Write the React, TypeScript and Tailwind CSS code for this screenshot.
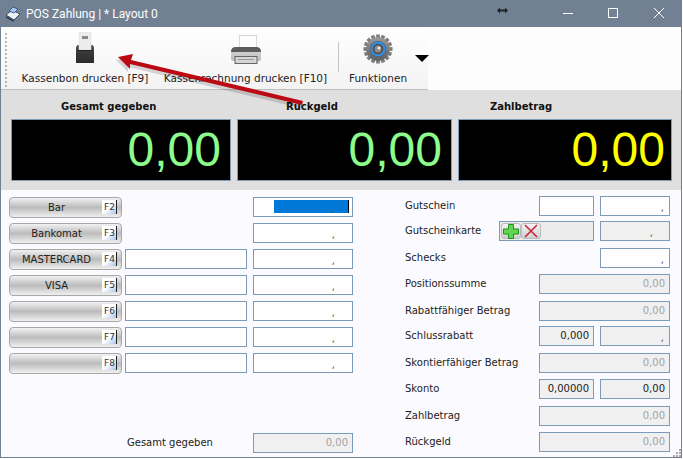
import React from "react";

const tahoma = "font-['DejaVu_Sans',sans-serif]";

function Input({ w, text, disabled, dark, comma, selected, commaPad, children }: { w: string; text?: string; disabled?: boolean; dark?: boolean; comma?: boolean; selected?: boolean; commaPad?: string; children?: React.ReactNode }) {
  return (
    <div className={`${w} h-5 shrink-0 border border-[#7b9bbb] ${disabled ? "bg-[#f0f0f0]" : "bg-white"} relative flex items-center justify-end pr-[4px] text-[10px] leading-none ${dark ? "text-[#222]" : "text-[#a4a4a4]"}`}>
      {selected && <div className="absolute left-[20px] right-[3px] top-[2px] bottom-[3px] bg-[#0078d7] border-r border-black" />}
      {children}
      {text && <span className="relative">{text}</span>}
      {comma && <span className={`relative text-[#555] text-[10px] leading-none mt-[3px] ${commaPad ?? "mr-[1px]"}`}>,</span>}
    </div>
  );
}

function PayButton({ label, fkey }: { label: string; fkey: string }) {
  return (
    <div className="w-[113px] h-[21px] shrink-0 relative rounded-[4px] border border-[#a8a8a8] bg-linear-to-b from-[#f2f2f2] via-[#bcbcbc] to-[#f0f0f0] flex items-center">
      <div className="w-[93px] text-center text-[10px] leading-none text-[#222]">{label}</div>
      <div className="absolute right-[4px] top-[2px] w-[15px] h-[14px] bg-linear-to-br from-white via-white to-[#a9c4ea] border-r border-[#222] text-[9px] leading-[14px] text-[#333] pl-[2px]">{fkey}</div>
    </div>
  );
}

function LeftRow({ label, fkey, mid, selected }: { label: string; fkey: string; mid?: boolean; selected?: boolean }) {
  return (
    <div className="flex h-[26px] items-start">
      <PayButton label={label} fkey={fkey} />
      <div className="w-[3px]" />
      {mid ? <Input w="w-[122px]" /> : <div className="w-[122px]" />}
      <div className="w-[6px]" />
      <Input w="w-[100px]" comma selected={selected} commaPad="mr-[13px]" />
    </div>
  );
}

function RightRow({ label, h, lw, children }: { label: string; h: string; lw?: string; children: React.ReactNode }) {
  return (
    <div className={`flex ${h} items-start`}>
      <div className={`${lw ?? "w-[134px]"} shrink-0 h-5 flex items-center text-[10px] leading-none text-[#222] whitespace-nowrap`}>{label}</div>
      {children}
    </div>
  );
}

function Display({ w, color, title, pl, pr }: { w: string; color: string; title: string; pl: string; pr: string }) {
  return (
    <div className={`${w} flex flex-col shrink-0`}>
      <div className={`h-[29px] pt-[10px] ${pl} text-[10px] leading-[13px] font-bold text-[#111] whitespace-nowrap`}>{title}</div>
      <div className={`h-[62px] bg-black border border-[#7f9db9] flex items-center justify-end ${pr} font-['Liberation_Sans',sans-serif] text-[48px] leading-none ${color}`}>0,00</div>
    </div>
  );
}

function ReceiptIcon() {
  return (
    <svg width="18" height="31" viewBox="0 0 18 31">
      <defs>
        <linearGradient id="rb" x1="0" y1="0" x2="0" y2="1">
          <stop offset="0" stopColor="#5a5a5a" />
          <stop offset="0.35" stopColor="#3a3a3a" />
          <stop offset="1" stopColor="#2a2a2a" />
        </linearGradient>
      </defs>
      <path d="M1.5 13 H16.5 L18 15 V31 H0 V15 Z" fill="url(#rb)" />
      <rect x="3" y="0" width="12" height="18" fill="#ececec" stroke="#dddddd" strokeWidth="0.5" />
      <rect x="6" y="4" width="6" height="3" fill="#8a8a8a" />
      <rect x="2" y="18" width="14" height="1" fill="#1f1f1f" />
    </svg>
  );
}

function PrinterIcon() {
  return (
    <svg width="30" height="29" viewBox="0 0 30 29">
      <defs>
        <linearGradient id="pb" x1="0" y1="0" x2="0" y2="1">
          <stop offset="0" stopColor="#d8d8d8" />
          <stop offset="1" stopColor="#bdbdbd" />
        </linearGradient>
      </defs>
      <rect x="8.5" y="0.5" width="17" height="13" fill="#fdfdfd" stroke="#d8d8d8" />
      <path d="M0 18 Q0 12 5 12 L25 12 Q30 12 30 18 L30 24 Q30 26 28 26 L2 26 Q0 26 0 24 Z" fill="url(#pb)" />
      <path d="M0 17 Q0 12 5 12 L25 12 Q30 12 30 17 Z" fill="#5c5c5c" />
      <rect x="4" y="21.5" width="22" height="7" fill="#d6d6d6" stroke="#666" />
      <rect x="7" y="24" width="16" height="1" fill="#999" />
    </svg>
  );
}

function GearIcon() {
  const teeth = Array.from({ length: 16 }, (_, i) => (i * 360) / 16);
  return (
    <svg width="30" height="30" viewBox="0 0 32 32">
      <defs>
        <linearGradient id="gg" x1="0" y1="0" x2="0" y2="1">
          <stop offset="0" stopColor="#9c9c9c" />
          <stop offset="1" stopColor="#5e5e5e" />
        </linearGradient>
      </defs>
      {teeth.map((a) => (
        <rect key={a} x="14" y="0.5" width="4" height="6" fill="#7d7d7d" transform={`rotate(${a} 16 16)`} />
      ))}
      <circle cx="16" cy="16" r="12.5" fill="url(#gg)" />
      <circle cx="16" cy="16" r="8.5" fill="#4c5560" />
      <circle cx="16" cy="16" r="7" fill="#66707c" stroke="#2a92ee" strokeWidth="2" />
      <circle cx="16" cy="16" r="4.5" fill="#8b8b8b" stroke="#3c3c3c" strokeWidth="1.2" />
      <circle cx="17" cy="15" r="1.6" fill="#ececec" />
    </svg>
  );
}

export default function App() {
  return (
    <div className={`w-[683px] h-[459px] relative overflow-hidden bg-white ${tahoma}`}>
      <div className="w-[682px] h-[458px] flex flex-col">
        <div className="h-[27px] shrink-0 bg-[#718093] flex items-center relative">
          <svg className="ml-[5px] mr-[5px]" width="16" height="16" viewBox="0 0 16 16">
            <path d="M1 9 L7 4 L15 8 L9 14 Z" fill="#eef2f8" stroke="#3a4a60" />
            <path d="M4 5 L8 1 L13 3 L9 7 Z" fill="#a9c8ee" stroke="#3a5a80" />
            <path d="M1 10 L9 14 L9 16 L1 12 Z" fill="#33425a" />
          </svg>
          <span className="font-['Roboto',sans-serif] text-[12px] leading-none text-white whitespace-nowrap">POS Zahlung | * Layout 0</span>
          <svg className="absolute left-[497px] top-[7px]" width="11" height="7" viewBox="0 0 11 7">
            <path d="M0 3.5 L3 0.5 L3 2.5 L8 2.5 L8 0.5 L11 3.5 L8 6.5 L8 4.5 L3 4.5 L3 6.5 Z" fill="#222" />
          </svg>
          <div className="absolute left-[563px] top-[13px] w-[10px] h-px bg-white" />
          <div className="absolute left-[608px] top-[8px] w-[10px] h-[10px] border border-white" />
          <svg className="absolute left-[654px] top-[8px]" width="10" height="10" viewBox="0 0 10 10">
            <path d="M0 0 L10 10 M10 0 L0 10" stroke="white" strokeWidth="1" />
          </svg>
        </div>

        <div className="flex-1 border-x border-b border-[#718093] flex flex-col">
          <div className="h-[63px] shrink-0 bg-[#fdfdfd] flex">
            <div className="w-[427px] h-full bg-linear-to-b from-white to-[#f3f3f3] border-b border-[#bdbdbd] flex items-start pl-[3px]">
              <div className="w-[1px] shrink-0" />
              <div className="w-[2px] shrink-0 h-[54px] mt-[6px] border-l-2 border-dotted border-[#b5b5b5]" />
              <div className="w-[156px] flex flex-col items-center pt-[5px] shrink-0">
                <div className="h-[31px]"><ReceiptIcon /></div>
                <div className="mt-[8px] text-[10.5px] leading-[14px] text-[#222] whitespace-nowrap">Kassenbon drucken [F9]</div>
              </div>
              <div className="w-[165px] flex flex-col items-center pt-[8px] shrink-0">
                <div className="h-[29px]"><PrinterIcon /></div>
                <div className="mt-[7px] text-[10.5px] leading-[14px] text-[#222] whitespace-nowrap">Kassenrechnung drucken [F10]</div>
              </div>
              <div className="w-px h-[30px] mt-[15px] ml-[10px] bg-[#c4c4c4] shrink-0" />
              <div className="w-[78px] flex flex-col items-center pt-[7px] shrink-0">
                <div className="h-[30px]"><GearIcon /></div>
                <div className="mt-[7px] text-[10.5px] leading-[14px] text-[#222] whitespace-nowrap">Funktionen</div>
              </div>
              <div className="mt-[28px] ml-[-2px] w-0 h-0 border-x-[7px] border-x-transparent border-t-[7px] border-t-black" />
            </div>
          </div>

          <div className="h-[100px] shrink-0 bg-[#dfdfdf] flex gap-[6px] pl-[10px]">
            <Display w="w-[220px]" color="text-[#8cfc8c]" title="Gesamt gegeben" pl="pl-[50px]" pr="pr-[9px]" />
            <Display w="w-[215px]" color="text-[#8cfc8c]" title="Rückgeld" pl="pl-[49px]" pr="pr-[9px]" />
            <Display w="w-[214px]" color="text-[#ffff00]" title="Zahlbetrag" pl="pl-[32px]" pr="pr-[6px]" />
          </div>

          <div className="flex-1 relative bg-[#fbfbff] flex pl-[8px]">
            <div className="w-[396px] shrink-0 flex flex-col pt-[7px]">
              <LeftRow label="Bar" fkey="F2" selected />
              <LeftRow label="Bankomat" fkey="F3" />
              <LeftRow label="MASTERCARD" fkey="F4" mid />
              <LeftRow label="VISA" fkey="F5" mid />
              <LeftRow label="" fkey="F6" mid />
              <LeftRow label="" fkey="F7" mid />
              <LeftRow label="" fkey="F8" mid />
              <div className="flex items-center mt-[54px] h-5">
                <div className="w-[244px] pl-[118px] text-[10px] leading-none text-[#222] whitespace-nowrap">Gesamt gegeben</div>
                <Input w="w-[100px]" disabled text="0,00" />
              </div>
            </div>
            <div className="flex-1 flex flex-col pt-[6px]">
              <RightRow label="Gutschein" h="h-[25px]">
                <Input w="w-[55px]" /><div className="w-[6px]" /><Input w="w-[70px]" comma />
              </RightRow>
              <RightRow label="Gutscheinkarte" h="h-[27px]" lw="w-[94px]">
                <div className="w-[95px] shrink-0 h-5 border border-[#7b9bbb] bg-[#ececec] flex items-center pl-[1px]">
                  <div className="w-[20px] h-4 rounded-[3px] border border-[#bbb] bg-linear-to-b from-[#f4f4f4] to-[#cfcfcf] flex items-center justify-center">
                    <svg width="16" height="15" viewBox="0 0 16 15"><path d="M5.5 0.5 H10.5 V5 H15.5 V10 H10.5 V14.5 H5.5 V10 H0.5 V5 H5.5 Z" fill="#63d650" stroke="#1f8f1f" /></svg>
                  </div>
                  <div className="w-[20px] h-4 rounded-[3px] border border-[#bbb] bg-linear-to-b from-[#f4f4f4] to-[#cfcfcf] flex items-center justify-center">
                    <svg width="14" height="14" viewBox="0 0 14 14"><path d="M1 1 L13 13 M13 1 L1 13" stroke="#c8283a" strokeWidth="1.6" /></svg>
                  </div>
                </div>
                <div className="w-[6px] shrink-0" />
                <Input w="w-[70px]" disabled comma commaPad="mr-[12px]" />
              </RightRow>
              <RightRow label="Schecks" h="h-[26px]">
                <div className="w-[61px] shrink-0" /><Input w="w-[70px]" comma />
              </RightRow>
              <RightRow label="Positionssumme" h="h-[27px]"><Input w="w-[131px]" disabled text="0,00" /></RightRow>
              <RightRow label="Rabattfähiger Betrag" h="h-[25px]"><Input w="w-[131px]" disabled text="0,00" /></RightRow>
              <RightRow label="Schlussrabatt" h="h-[27px]">
                <Input w="w-[55px]" disabled dark text="0,000" /><div className="w-[6px] shrink-0" /><Input w="w-[70px]" disabled comma />
              </RightRow>
              <RightRow label="Skontierfähiger Betrag" h="h-[26px]"><Input w="w-[131px]" disabled text="0,00" /></RightRow>
              <RightRow label="Skonto" h="h-[27px]">
                <Input w="w-[55px]" disabled dark text="0,00000" /><div className="w-[6px] shrink-0" /><Input w="w-[70px]" disabled dark text="0,00" />
              </RightRow>
              <RightRow label="Zahlbetrag" h="h-[26px]"><Input w="w-[131px]" disabled text="0,00" /></RightRow>
              <RightRow label="Rückgeld" h="h-[20px]"><Input w="w-[131px]" disabled text="0,00" /></RightRow>
            </div>
            <svg className="absolute right-0 bottom-0" width="9" height="9" viewBox="0 0 9 9">
              <g fill="#a8a8a8">
                <rect x="7" y="1" width="2" height="2" />
                <rect x="4" y="4" width="2" height="2" />
                <rect x="7" y="4" width="2" height="2" />
                <rect x="1" y="7" width="2" height="2" />
                <rect x="4" y="7" width="2" height="2" />
                <rect x="7" y="7" width="2" height="2" />
              </g>
            </svg>
          </div>
        </div>
      </div>

      <svg className="absolute left-0 top-0 pointer-events-none" width="683" height="459" viewBox="0 0 683 459">
        <path d="M118 57 L133 54 L131 60 L303 101 L302 105 L130 64 L130 69 Z" fill="#000" opacity="0.14" transform="translate(-2 3)" />
        <path d="M118 57 L133 54 L131 60 L303 101 L302 105 L130 64 L130 69 Z" fill="#bb0a14" />
      </svg>
    </div>
  );
}
